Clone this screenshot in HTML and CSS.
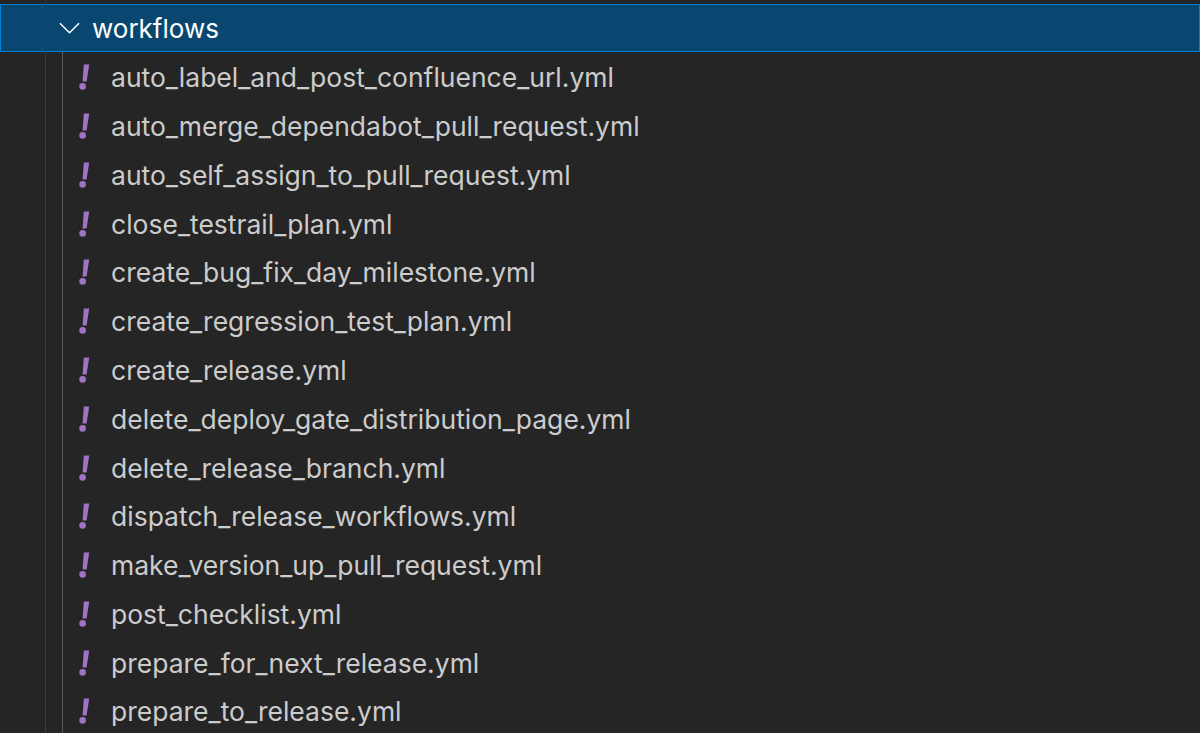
FILE: index.html
```html
<!DOCTYPE html>
<html lang="en">
<head>
<meta charset="utf-8">
<title>workflows</title>
<link rel="stylesheet" href="styles.css">
</head>
<body>
<div class="tree">
  <div class="guide guide-outer"></div>
  <div class="guide guide-inner"></div>
  <div class="folder">
    <svg class="chevron" viewBox="0 0 22 12" aria-hidden="true"><path d="M1 1l10 10L21 1"/></svg>
    <span>workflows</span>
  </div>
  <ul class="files">
    <li class="file"><svg class="yaml" viewBox="0 0 11 26" aria-hidden="true"><path d="M4.8 0.5h5.4L7.6 17.5H3.6z"/><circle cx="3.6" cy="22.4" r="3.3"/></svg><span>auto_label_and_post_confluence_url.yml</span></li>
    <li class="file"><svg class="yaml" viewBox="0 0 11 26" aria-hidden="true"><path d="M4.8 0.5h5.4L7.6 17.5H3.6z"/><circle cx="3.6" cy="22.4" r="3.3"/></svg><span>auto_merge_dependabot_pull_request.yml</span></li>
    <li class="file"><svg class="yaml" viewBox="0 0 11 26" aria-hidden="true"><path d="M4.8 0.5h5.4L7.6 17.5H3.6z"/><circle cx="3.6" cy="22.4" r="3.3"/></svg><span>auto_self_assign_to_pull_request.yml</span></li>
    <li class="file"><svg class="yaml" viewBox="0 0 11 26" aria-hidden="true"><path d="M4.8 0.5h5.4L7.6 17.5H3.6z"/><circle cx="3.6" cy="22.4" r="3.3"/></svg><span>close_testrail_plan.yml</span></li>
    <li class="file"><svg class="yaml" viewBox="0 0 11 26" aria-hidden="true"><path d="M4.8 0.5h5.4L7.6 17.5H3.6z"/><circle cx="3.6" cy="22.4" r="3.3"/></svg><span>create_bug_fix_day_milestone.yml</span></li>
    <li class="file"><svg class="yaml" viewBox="0 0 11 26" aria-hidden="true"><path d="M4.8 0.5h5.4L7.6 17.5H3.6z"/><circle cx="3.6" cy="22.4" r="3.3"/></svg><span>create_regression_test_plan.yml</span></li>
    <li class="file"><svg class="yaml" viewBox="0 0 11 26" aria-hidden="true"><path d="M4.8 0.5h5.4L7.6 17.5H3.6z"/><circle cx="3.6" cy="22.4" r="3.3"/></svg><span>create_release.yml</span></li>
    <li class="file"><svg class="yaml" viewBox="0 0 11 26" aria-hidden="true"><path d="M4.8 0.5h5.4L7.6 17.5H3.6z"/><circle cx="3.6" cy="22.4" r="3.3"/></svg><span>delete_deploy_gate_distribution_page.yml</span></li>
    <li class="file"><svg class="yaml" viewBox="0 0 11 26" aria-hidden="true"><path d="M4.8 0.5h5.4L7.6 17.5H3.6z"/><circle cx="3.6" cy="22.4" r="3.3"/></svg><span>delete_release_branch.yml</span></li>
    <li class="file"><svg class="yaml" viewBox="0 0 11 26" aria-hidden="true"><path d="M4.8 0.5h5.4L7.6 17.5H3.6z"/><circle cx="3.6" cy="22.4" r="3.3"/></svg><span>dispatch_release_workflows.yml</span></li>
    <li class="file"><svg class="yaml" viewBox="0 0 11 26" aria-hidden="true"><path d="M4.8 0.5h5.4L7.6 17.5H3.6z"/><circle cx="3.6" cy="22.4" r="3.3"/></svg><span>make_version_up_pull_request.yml</span></li>
    <li class="file"><svg class="yaml" viewBox="0 0 11 26" aria-hidden="true"><path d="M4.8 0.5h5.4L7.6 17.5H3.6z"/><circle cx="3.6" cy="22.4" r="3.3"/></svg><span>post_checklist.yml</span></li>
    <li class="file"><svg class="yaml" viewBox="0 0 11 26" aria-hidden="true"><path d="M4.8 0.5h5.4L7.6 17.5H3.6z"/><circle cx="3.6" cy="22.4" r="3.3"/></svg><span>prepare_for_next_release.yml</span></li>
    <li class="file"><svg class="yaml" viewBox="0 0 11 26" aria-hidden="true"><path d="M4.8 0.5h5.4L7.6 17.5H3.6z"/><circle cx="3.6" cy="22.4" r="3.3"/></svg><span>prepare_to_release.yml</span></li>
  </ul>
</div>
</body>
</html>
```
FILE: styles.css
```css
html, body {
  margin: 0;
  height: 100%;
  overflow: hidden;
  background: #252526;
}

.tree {
  position: relative;
  height: 733px;
  padding-top: 4px;
  box-sizing: border-box;
  overflow: hidden;
  font-family: Inter, "Liberation Sans", sans-serif;
  font-size: 26px;
  color: #cccccc;
}

.guide {
  position: absolute;
  top: 0;
  bottom: 0;
  width: 1px;
  z-index: 2;
}

.guide-outer {
  left: 45px;
  background: #3a3a3a;
}

.guide-inner {
  left: 62px;
  background: #585858;
  top: 52px;
}

.folder {
  display: flex;
  align-items: center;
  height: 48px;
  box-sizing: border-box;
  padding-left: 58px;
  background: #094771;
  border: 1.5px solid #007fd4;
  color: #ffffff;
}

.chevron {
  width: 21px;
  height: 12px;
  margin-right: 12px;
  flex: none;
  fill: none;
  stroke: #ffffff;
  stroke-width: 1.6;
}

.files {
  list-style: none;
  margin: 1px 0 0;
  padding: 0;
  font-size: 26.5px;
}

.file {
  display: flex;
  align-items: center;
  height: 48.77px;
  padding-left: 79px;
}

.yaml {
  width: 11px;
  height: 26px;
  margin-right: 21px;
  flex: none;
  fill: #a074c4;
}
```
